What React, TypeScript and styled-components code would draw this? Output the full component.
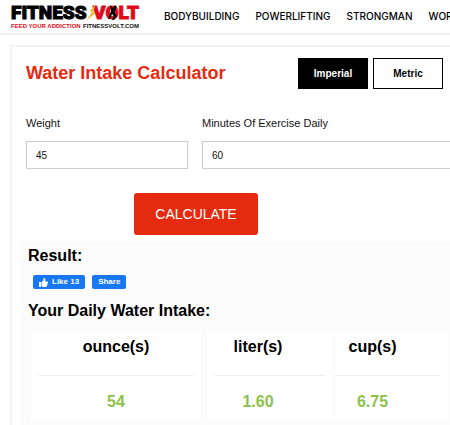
import React, { useState } from "react";
import styled, { createGlobalStyle } from "styled-components";

const GlobalStyle = createGlobalStyle`
  *, *::before, *::after { box-sizing: border-box; }
  body {
    margin: 0;
    background: #fff;
    color: #111;
    font-family: "Liberation Sans", Arial, sans-serif;
    overflow-x: hidden;
  }
  h1, h2, h3, p { margin: 0; }
  button, input { font-family: inherit; }
`;

const Header = styled.header`
  display: flex;
  align-items: flex-start;
  gap: 23px;
  height: 35px;
  padding-left: 11px;
  border-bottom: 2px solid #f0f0f0;
  overflow: hidden;
`;

const LogoLink = styled.a`
  flex: none;
  display: block;
  line-height: 0;
`;

const LogoText = styled.text`
  font-family: Roboto, sans-serif;
  font-size: 19px;
  font-weight: 900;
  stroke-width: 1;
`;

const LogoTag = styled.text`
  font-family: "Liberation Sans", Arial, sans-serif;
  font-size: 6px;
  font-weight: 700;
`;

const Nav = styled.nav`
  display: flex;
  gap: 16px;
  padding-top: 9px;
`;

const NavLink = styled.a`
  color: #000;
  font: 500 10px/14px Inter, sans-serif;
  text-decoration: none;
  white-space: nowrap;
`;

const Card = styled.main`
  margin: 10px 0 0 10px;
  border: solid #f4f4f4;
  border-width: 2px 0 0 2px;
`;

const TitleRow = styled.div`
  display: flex;
  align-items: center;
  justify-content: space-between;
  padding: 10px 7px 0 14px;
`;

const Title = styled.h1`
  color: #e42b10;
  font-size: 18px;
  line-height: 32px;
  white-space: nowrap;
`;

const UnitSwitch = styled.div`
  display: flex;
  gap: 5px;
`;

const UnitButton = styled.button<{ $active: boolean }>`
  width: 70px;
  height: 31px;
  padding: 0;
  border: 1px solid #000;
  background: ${(p) => (p.$active ? "#000" : "#fff")};
  color: ${(p) => (p.$active ? "#fff" : "#000")};
  font-size: 10px;
  font-weight: 700;
`;

const Fields = styled.form`
  display: grid;
  grid-template-columns: 162px 1fr;
  column-gap: 14px;
  padding: 26px 0 0 14px;
`;

const Field = styled.label`
  display: grid;
  gap: 10px;
  font-size: 11px;
  line-height: 16px;
`;

const NumberInput = styled.input<{ $open?: boolean }>`
  width: 100%;
  height: 28px;
  padding: 0 9px;
  border: 1px solid #ccc;
  border-right-width: ${(p) => (p.$open ? 0 : 1)}px;
  border-radius: 0;
  background: #fff;
  color: #111;
  font-size: 10px;
  outline: none;
`;

const Calculate = styled.button`
  grid-column: 1 / -1;
  justify-self: start;
  width: 124px;
  height: 42px;
  margin: 24px 0 6px 108px;
  padding: 0;
  border: 0;
  border-radius: 3px;
  background: #e42b10;
  color: #fff;
  font-size: 14px;
`;

const Results = styled.section`
  margin-left: 8px;
  padding: 5px 2px 8px 8px;
  background: #fbfbfb;
`;

const Heading = styled.h2`
  color: #000;
  font-size: 16px;
  line-height: 20px;
`;

const Social = styled.div`
  display: flex;
  gap: 7px;
  padding: 9px 0 12px 5px;
`;

const SocialButton = styled.button`
  display: flex;
  align-items: center;
  gap: 4px;
  height: 14px;
  padding: 0 6px;
  border: 0;
  border-radius: 2px;
  background: #1877f2;
  color: #fff;
  font-size: 8px;
  font-weight: 700;
  line-height: 14px;
  white-space: nowrap;
`;

const Amounts = styled.div`
  display: grid;
  grid-template-columns: 174px 126px 1fr;
  column-gap: 2px;
  padding: 10px 0 0 3px;
`;

const Amount = styled.article<{ $flush?: boolean }>`
  padding: ${(p) => (p.$flush ? "0 8px 0 0" : "0 8px")};
  background: #fff;
  font-size: 16px;
  font-weight: 700;
  line-height: 20px;
  text-align: center;

  &:first-child { margin-right: 4px; }
`;

const Unit = styled.h3<{ $inset: number }>`
  padding: 6px ${(p) => p.$inset}px 18px 0;
  border-bottom: 1px solid #eee;
  color: #000;
  font-size: 16px;
`;

const Value = styled.p<{ $inset: number }>`
  padding: 16px ${(p) => p.$inset}px 8px 0;
  color: #8bc34a;
`;

const Logo = () => (
  <svg width="130" height="31" viewBox="0 0 130 31" role="img" aria-label="Fitness Volt">
    <LogoText x="0" y="19" fill="#000" stroke="#000">FITNESS</LogoText>
    <LogoText x="82" y="19" fill="#e00b18" stroke="#e00b18">VOLT</LogoText>
    <path d="M85 4 79 11 81 12 75 21 84 13 82 12Z" fill="#f4b52c" />
    <path
      d="M99 5 102 8 104 5 106 7 104 10 104 13 106 16 103 20 101 20 103 16 101 14 99 19 97 19 100 11Z"
      fill="#000"
    />
    <LogoTag x="0" y="28" fill="#e00b18">FEED YOUR ADDICTION</LogoTag>
    <LogoTag x="72" y="28" fill="#111">FITNESSVOLT.COM</LogoTag>
  </svg>
);

const Thumb = () => (
  <svg width="9" height="9" viewBox="0 0 18 18" fill="#fff" aria-hidden="true">
    <path d="M0 8H4V18H0ZM5 8 9 5 9 0Q13 0 13 4L12 7H17Q19 9 17 11 18 13 16 14 17 16 14 18H8L5 16Z" />
  </svg>
);

const links = ["BODYBUILDING", "POWERLIFTING", "STRONGMAN", "WORKOUTS"];
const amounts = [
  { unit: "ounce(s)", value: "54", inset: 0 },
  { unit: "liter(s)", value: "1.60", inset: 24 },
  { unit: "cup(s)", value: "6.75", inset: 30, flush: true },
];

export default function App() {
  const [system, setSystem] = useState("Imperial");
  return (
    <>
      <GlobalStyle />
      <Header>
        <LogoLink href="#"><Logo /></LogoLink>
        <Nav>
          {links.map((label) => (
            <NavLink href="#" key={label}>{label}</NavLink>
          ))}
        </Nav>
      </Header>
      <Card>
        <TitleRow>
          <Title>Water Intake Calculator</Title>
          <UnitSwitch>
            {["Imperial", "Metric"].map((name) => (
              <UnitButton
                key={name}
                type="button"
                $active={system === name}
                aria-pressed={system === name}
                onClick={() => setSystem(name)}
              >
                {name}
              </UnitButton>
            ))}
          </UnitSwitch>
        </TitleRow>
        <Fields onSubmit={(e) => e.preventDefault()}>
          <Field>
            Weight
            <NumberInput defaultValue="45" inputMode="numeric" />
          </Field>
          <Field>
            Minutes Of Exercise Daily
            <NumberInput $open defaultValue="60" inputMode="numeric" />
          </Field>
          <Calculate type="submit">CALCULATE</Calculate>
        </Fields>
        <Results>
          <Heading>Result:</Heading>
          <Social>
            <SocialButton type="button"><Thumb />Like 13</SocialButton>
            <SocialButton type="button">Share</SocialButton>
          </Social>
          <Heading>Your Daily Water Intake:</Heading>
          <Amounts>
            {amounts.map((a) => (
              <Amount key={a.unit} $flush={a.flush}>
                <Unit $inset={a.inset}>{a.unit}</Unit>
                <Value $inset={a.inset}>{a.value}</Value>
              </Amount>
            ))}
          </Amounts>
        </Results>
      </Card>
    </>
  );
}
